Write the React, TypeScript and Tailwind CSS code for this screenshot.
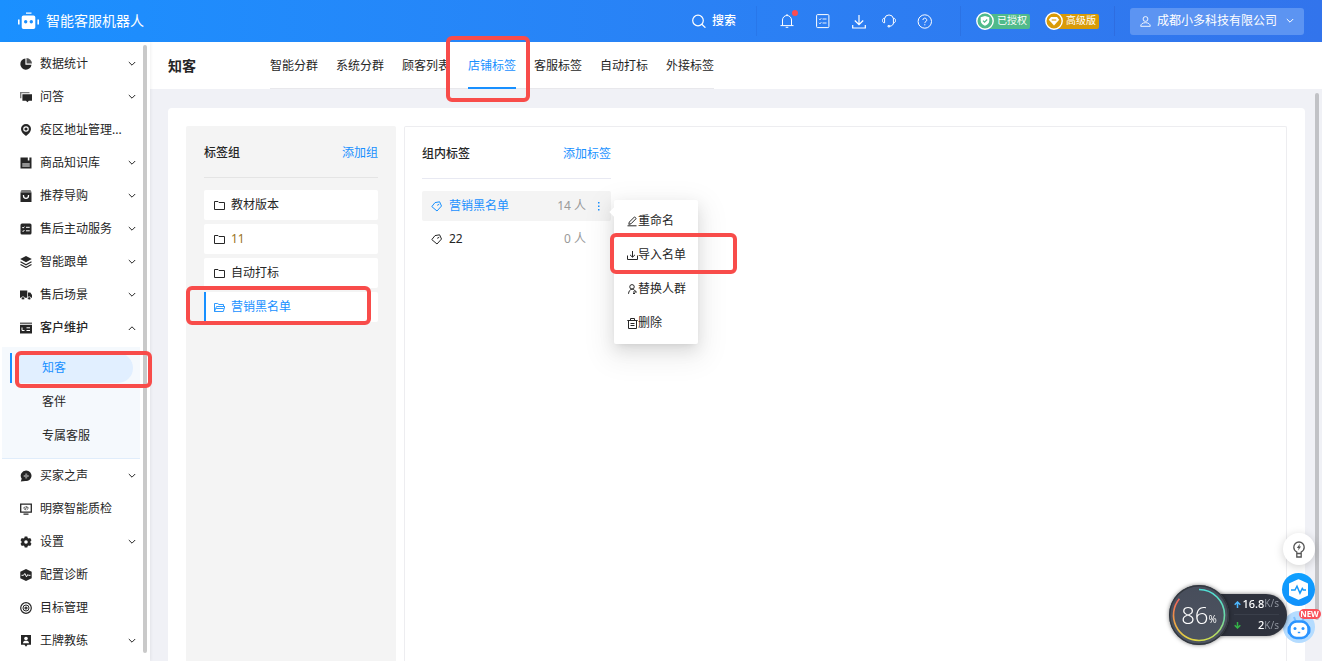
import type { ReactNode } from 'react';

const menuIcons: Record<string, ReactNode> = {
  stats: (
    <>
      <path d="M5.4.5A5.6 5.6 0 1 0 11.5 6.7H5.4z" />
      <path d="M6.5 0v5.5H12A5.6 5.6 0 0 0 6.5 0z" opacity=".8" />
    </>
  ),
  qa: (
    <>
      <path d="M0 1h9.5v1.3H1.4v5H0z" opacity=".6" />
      <path d="M2.4 3.2H12v6.6H8.8L7.4 11.2 6 9.8H2.4z" />
    </>
  ),
  pin: (
    <>
      <path fillRule="evenodd" d="M6 0a5 5 0 0 0-5 5c0 3 2.6 5.2 5 7 2.4-1.8 5-4 5-7a5 5 0 0 0-5-5zm0 2.2a2.8 2.8 0 1 1 0 5.6 2.8 2.8 0 0 1 0-5.6z" />
      <circle cx="6" cy="5" r="1.6" />
    </>
  ),
  book: (
    <>
      <path fillRule="evenodd" d="M.5.5h7.3v3h1.6v-3h2.1v11H.5zM2.500 6v4h7V6z" />
      <path d="M2.500 6h7v4h-7z" opacity=".5" />
    </>
  ),
  bag: (
    <>
      <path d="M1.500 0h9l1 2H.5z" opacity=".6" />
      <path d="M.5 2.300h11V12H.5z" />
      <path d="M3.500 5v.8a2.500 2.500 0 0 0 5 0V5" fill="none" stroke="#fff" strokeWidth="1.3" />
    </>
  ),
  list: (
    <>
      <rect x=".5" y=".5" width="11" height="11" rx="1.5" />
      <path d="M2.300 4.300l.8.8 1.300-1.500M6 4.300h3.700M2.300 7.800l.8.8L4.400 7M6 7.800h3.700" fill="none" stroke="#fff" />
    </>
  ),
  layers: (
    <>
      <path d="M6 0l5.800 3L6 6.200.2 3z" />
      <path d="M.5 5.800L6 8.800l5.500-3M.5 8.500l5.500 3 5.500-3" fill="none" stroke="currentColor" strokeWidth="1.2" />
    </>
  ),
  truck: (
    <>
      <path d="M0 1.500h7.300v7.300H0zM8 3.500h2.300L12 6v2.800H8z" />
      <circle cx="3" cy="9.3" r="1.6" stroke="#fff" strokeWidth=".7" />
      <circle cx="9.2" cy="9.3" r="1.6" stroke="#fff" strokeWidth=".7" />
    </>
  ),
  card: (
    <>
      <path d="M0 .5h12v1.800H0z" opacity=".7" />
      <path d="M0 3h12v8.500H0z" />
      <path d="M2 5.500v3h2.500M6.500 5.800H10M6.500 8.500H10" fill="none" stroke="#fff" />
    </>
  ),
  voice: (
    <>
      <path d="M6.200.5a5.300 5.300 0 1 1-1 10.500L.8 11.600 1.700 8.800A5.300 5.300 0 0 1 6.200.5z" />
      <path d="M3.700 5.900h5M6.200 3.400v5" stroke="#fff" strokeWidth="2" opacity=".45" />
    </>
  ),
  monitor: (
    <>
      <path d="M.7 1.200h10.600v8H.7zM3.500 11.200h5" fill="none" stroke="currentColor" strokeWidth="1.3" />
      <path d="M5.300 3.400L3.600 5.200l1.700 1.600M6.700 3.400l1.700 1.800-1.700 1.600M5.300 6.800l1.400-3.400" fill="none" stroke="currentColor" strokeWidth=".8" />
    </>
  ),
  gear: (
    <path
      fillRule="evenodd"
      d="M4.700.6h2.600l.4 1.400 1 .5 1.500-.5 1.300 2.300-1 1V6.700l1 1-1.300 2.300-1.500-.4-1 .5-.4 1.400H4.700L4.300 10.100l-1-.5-1.500.4L.5 7.700l1-1V5.300l-1-1L1.800 2l1.500.5 1-.5zM6 4.200a1.800 1.800 0 1 0 0 3.600 1.800 1.800 0 0 0 0-3.600z"
    />
  ),
  diagnose: (
    <>
      <path d="M6 0l5.700 2.800v6.400L6 12 .3 9.200V2.800z" />
      <path d="M1.500 6.300h2L4.800 4.500l1.700 3.300 1.300-2.200.7.700h2" fill="none" stroke="#fff" />
    </>
  ),
  target: (
    <g fill="none" stroke="currentColor">
      <circle cx="6" cy="6" r="5.3" strokeWidth="1.2" />
      <circle cx="6" cy="6" r="3" />
      <circle cx="6" cy="6" r="1" strokeWidth="1.2" />
    </g>
  ),
  coach: (
    <>
      <path d="M1 0h10v9.800H7.500L6 11.800 4.500 9.800H1z" />
      <circle cx="6" cy="3.5" r="1.8" fill="#fff" />
      <path d="M3 8.300c0-2 1.300-2.500 3-2.500s3 .5 3 2.500z" fill="#fff" />
    </>
  ),
};

const menu = [
  { icon: 'stats', label: '数据统计', arrow: true },
  { icon: 'qa', label: '问答', arrow: true },
  { icon: 'pin', label: '疫区地址管理...', arrow: false },
  { icon: 'book', label: '商品知识库', arrow: true },
  { icon: 'bag', label: '推荐导购', arrow: true },
  { icon: 'list', label: '售后主动服务', arrow: true },
  { icon: 'layers', label: '智能跟单', arrow: true },
  { icon: 'truck', label: '售后场景', arrow: true },
];

const menuAfter = [
  { icon: 'voice', label: '买家之声', arrow: true },
  { icon: 'monitor', label: '明察智能质检', arrow: false },
  { icon: 'gear', label: '设置', arrow: true },
  { icon: 'diagnose', label: '配置诊断', arrow: false },
  { icon: 'target', label: '目标管理', arrow: false },
  { icon: 'coach', label: '王牌教练', arrow: true },
];

const tabs = ['智能分群', '系统分群', '顾客列表', '店铺标签', '客服标签', '自动打标', '外接标签'];
const groups = ['教材版本', '11', '自动打标', '营销黑名单'];

function Chevron({ up }: { up?: boolean }) {
  return (
    <svg className={up ? 'size-2 rotate-180' : 'size-2'} viewBox="0 0 8 8" fill="none" stroke="currentColor">
      <path d="M.8 2L4 5.200l3.200-3.200" />
    </svg>
  );
}

function Highlight({ className }: { className: string }) {
  return <span className={`pointer-events-none absolute z-30 rounded-md border-4 border-[#f84c4a] ${className}`} />;
}

function MenuItem({ icon, label, arrow, open }: { icon: string; label: string; arrow: boolean; open?: boolean }) {
  return (
    <a href="#" className={`flex h-[33px] items-center pr-[7px] pl-5 ${open ? 'font-medium' : ''}`}>
      <svg className="mr-2 size-3 shrink-0" viewBox="0 0 12 12" fill="currentColor">
        {menuIcons[icon]}
      </svg>
      <span className="flex-1 whitespace-nowrap">{label}</span>
      {arrow && <Chevron up={open} />}
    </a>
  );
}

function Sidebar() {
  return (
    <aside className="relative z-10 flex w-[150px] shrink-0 bg-white shadow-[1px_0_3px_rgba(0,0,0,0.06)]">
      <nav className="min-w-0 flex-1 pt-[5px]">
        {menu.map((item) => (
          <MenuItem key={item.label} {...item} />
        ))}
        <MenuItem icon="card" label="客户维护" arrow open />
        <div className="mt-[3px] mr-[3px] ml-0.5 flex flex-col gap-1 border-b border-[#e0edfb] bg-[#f5f9fd] pt-1.5 pr-[7px] pb-[7px] pl-2">
          <a href="#" className="relative flex h-[30px] text-[#1890ff]">
            <span className="w-0.5 bg-[#1890ff]" />
            <span className="ml-1 flex flex-1 items-center rounded-r-full bg-[#e1efff] pl-[26px]">知客</span>
            <Highlight className="-top-0.5 -right-[19px] -bottom-[5px] left-[5px]" />
          </a>
          <a href="#" className="flex h-[30px] items-center pl-8">客伴</a>
          <a href="#" className="flex h-[30px] items-center pl-8">专属客服</a>
        </div>
        {menuAfter.map((item) => (
          <MenuItem key={item.label} {...item} />
        ))}
      </nav>
      <div className="mt-[3px] mr-[3px] mb-2 w-1 rounded-full bg-[#c9c9c9]" />
    </aside>
  );
}

function Badge({ label, gold }: { label: string; gold?: boolean }) {
  return (
    <div className="flex items-center">
      <svg className="z-10 size-[18px]" viewBox="0 0 18 18">
        <circle cx="9" cy="9" r="8.2" fill={gold ? '#d99b07' : '#50ba8b'} stroke="#fff" strokeWidth="1.4" />
        {gold ? (
          <>
            <path d="M6 5h6l2.200 2.800L9 13.500 3.800 7.800z" fill="#fff" />
            <path d="M6.700 8h4.600" stroke="#d99b07" strokeWidth="1.1" />
          </>
        ) : (
          <>
            <path d="M9 4l4.300 1.200v3.600c0 2.700-2.300 4.200-4.300 5-2-.8-4.300-2.300-4.300-5V5.200z" fill="#fff" />
            <path d="M7 8.700l1.500 1.500L11.200 7.500" fill="none" stroke="#50ba8b" strokeWidth="1.2" />
          </>
        )}
      </svg>
      <span
        className={`-ml-2 flex h-[15px] w-11 items-center rounded-xs pl-[11px] text-[10px] whitespace-nowrap ${
          gold ? 'bg-[#d99b07]' : 'bg-[#50ba8b]'
        }`}
      >
        {label}
      </span>
    </div>
  );
}

function HeaderIcon({ label, dot, children }: { label: string; dot?: boolean; children: ReactNode }) {
  return (
    <button type="button" aria-label={label} className="relative">
      <svg className="size-4" viewBox="0 0 16 16" fill="none" stroke="currentColor">
        {children}
      </svg>
      {dot && <span className="absolute -top-[3px] -right-[3px] size-1.5 rounded-full bg-[#fb4b50]" />}
    </button>
  );
}

function Header() {
  return (
    <header className="flex h-[42px] shrink-0 items-center bg-linear-to-r from-[#1a90ff] to-[#3274ec] pr-[18px] pl-[18px] text-white">
      <svg className="mr-[7px] h-[18px] w-[21px]" viewBox="0 0 21 18" fill="currentColor">
        <path d="M8 .5h5.500v1.300H8zM0 7.500h1.600v5H0zM19.400 7.500H21v5h-1.600z" />
        <path fillRule="evenodd" d="M5.500 3.500h10A1.800 1.800 0 0 1 17.300 5.300v9.900a1.800 1.800 0 0 1-1.800 1.800h-10a1.800 1.800 0 0 1-1.800-1.800V5.300a1.800 1.800 0 0 1 1.800-1.800zM7.700 8a1.700 1.700 0 1 0 0 3.400 1.700 1.700 0 0 0 0-3.400zm5.600 0a1.700 1.700 0 1 0 0 3.400 1.700 1.700 0 0 0 0-3.400z" />
      </svg>
      <h1 className="text-sm">智能客服机器人</h1>

      <button type="button" className="mr-5 ml-auto flex items-center gap-1.5 font-medium">
        <svg className="size-3.5" viewBox="0 0 14 14" fill="none" stroke="currentColor" strokeWidth="1.2">
          <circle cx="6" cy="6.5" r="5.3" />
          <path d="M9.800 10.300l3.600 3.400" />
        </svg>
        搜索
      </button>
      <span className="h-[30px] w-px bg-[#2877ea]" />

      <div className="mr-[27px] ml-[22px] flex items-center gap-5">
        <HeaderIcon label="通知" dot>
          <path d="M3.500 12.500V7a4.500 4.500 0 0 1 9 0v5.500M1.500 12.600h13M8 1v1.500M6.700 14.300h2.600" />
        </HeaderIcon>
        <HeaderIcon label="任务">
          <rect x="1.6" y="1.6" width="12.3" height="13" rx="1" />
          <path d="M4 5.800l1 1 1.300-1.600M7.500 6h4M4 9.800l1 1 1.300-1.600M7.500 10h4" strokeWidth=".9" />
        </HeaderIcon>
        <div className="flex gap-3.5">
          <HeaderIcon label="下载">
            <path d="M8 2v9.500M3.800 7.500L8 11.700l4.200-4.200M1.700 12v3h12.600v-3" strokeWidth="1.2" />
          </HeaderIcon>
          <HeaderIcon label="客服">
            <path d="M3.600 5.500a4.500 4.500 0 0 1 8.800 0M12.500 9.500c0 2.300-1.500 3.500-3.800 3.700" />
            <path d="M3.600 5.200v4.600C2 9.800 1.500 8.800 1.500 7.500S2 5.200 3.600 5.200zM12.400 5.200v4.600c1.600 0 2.100-1 2.100-2.300s-.5-2.300-2.100-2.300zM7 12.600h1.700v1.300H7z" />
          </HeaderIcon>
        </div>
        <HeaderIcon label="帮助">
          <circle cx="7.8" cy="8.5" r="6.7" />
          <path d="M5.900 7a1.900 1.900 0 1 1 2.800 1.700c-.6.300-.9.600-.9 1.400M7.800 11.200v1.100" />
        </HeaderIcon>
      </div>

      <div className="flex items-center gap-[15px]">
        <span className="h-[30px] w-px bg-[#2b72e4]" />
        <Badge label="已授权" />
        <Badge label="高级版" gold />
        <span className="h-[30px] w-px bg-[#2e6de0]" />
        <button type="button" className="flex h-[27px] w-[174px] items-center rounded-[3px] bg-[#5c94f2] px-2.5">
          <svg className="mr-1.5 size-[11px]" viewBox="0 0 11 11" fill="none" stroke="currentColor" strokeWidth=".9">
            <circle cx="5.5" cy="3" r="2.4" />
            <path d="M.7 10.300c0-2.300 2-3.600 4.800-3.600s4.800 1.300 4.800 3.600z" />
          </svg>
          <span className="flex-1 text-left whitespace-nowrap">成都小多科技有限公司</span>
          <Chevron />
        </button>
      </div>
    </header>
  );
}

function TagIcon() {
  return (
    <svg className="mr-[7px] size-[11px] shrink-0" viewBox="0 0 11 11" fill="none" stroke="currentColor">
      <path d="M4 1.600l4.600-.8 1.900 4.200L6 10 .8 5.600z" strokeLinejoin="round" />
      <path d="M6.200 4.300l2-1" />
    </svg>
  );
}

function GroupPanel() {
  return (
    <section className="w-[210px] shrink-0 rounded-t-xs bg-[#f4f4f4] px-[18px]">
      <div className="flex h-[52px] items-center justify-between border-b border-[#e4e4e4] pt-0.5">
        <h3 className="font-medium">标签组</h3>
        <button type="button" className="text-[#1890ff]">添加组</button>
      </div>
      <ul className="flex flex-col gap-1 pt-3">
        {groups.map((name) => {
          const active = name === '营销黑名单';
          return (
            <li key={name} className={`relative flex h-[30px] rounded-xs bg-white ${active ? 'text-[#1890ff]' : ''}`}>
              <span className={`w-0.5 ${active ? 'bg-[#1890ff]' : ''}`} />
              <button type="button" className="flex flex-1 items-center pl-2">
                <svg className="mr-1.5 size-[11px]" viewBox="0 0 11 11" fill="none" stroke="currentColor">
                  {active ? (
                    <path d="M.5 9.500v-8h3.200l1.200 1h4.600v2M.5 9.500l2-5h8.300l-1.500 5zM2.200 6.500h7.500" strokeWidth=".9" />
                  ) : (
                    <path d="M.5 1.500h3.500l1 1h5.500v7H.5z" />
                  )}
                </svg>
                <span className={name === '11' ? 'text-[#9a7424]' : ''}>{name}</span>
              </button>
              {active && <Highlight className="-top-1.5 right-[7px] -bottom-[3px] -left-[18px]" />}
            </li>
          );
        })}
      </ul>
    </section>
  );
}

function ActionMenu() {
  const items = [
    {
      label: '重命名',
      icon: <path d="M1.800 8.300l.5-2.200L7.500.9l1.700 1.600L4 7.800zM.5 9.800h9" />,
    },
    {
      label: '导入名单',
      icon: <path d="M5.500 1v6M3 4.800l2.500 2.400L8 4.800M.5 5.500v4h10v-4" />,
    },
    {
      label: '替换人群',
      icon: <path d="M5 .6a2.200 2.200 0 1 1 0 4.500A2.200 2.200 0 0 1 5 .6zM1.500 9.800c.2-2.500 1.500-4.400 3.500-4.700 1.300 0 2.300.7 2.900 1.700M6 8h3.500M7.800 6.500l1.700 1.500M6 9.500h2" />,
    },
    {
      label: '删除',
      icon: (
        <>
          <path d="M.3 2.500h10.400M3.500 2V.5h4V2M1.500 2.500v8h8v-8" />
          <path d="M3.500 5.500h4M3.500 7.500h4" />
        </>
      ),
    },
  ];
  return (
    <div className="absolute top-[9px] left-full z-20 ml-[3px] w-[84px] rounded-xs bg-white py-1 text-[#262626] shadow-[0_3px_6px_-4px_rgba(0,0,0,0.12),0_6px_16px_rgba(0,0,0,0.10),0_9px_28px_8px_rgba(0,0,0,0.06)]">
      <span className="absolute top-2 -left-[3px] size-2 rotate-45 bg-white" />
      {items.map((item) => (
        <button key={item.label} type="button" className="relative flex h-[34px] w-full items-center pl-[13px] whitespace-nowrap">
          <svg className="size-[11px] shrink-0" viewBox="0 0 11 11" fill="none" stroke="currentColor">
            {item.icon}
          </svg>
          {item.label}
          {item.label === '导入名单' && <Highlight className="-top-[5px] -right-[39px] -bottom-0.5 -left-1" />}
        </button>
      ))}
    </div>
  );
}

function TagPanel() {
  return (
    <section className="min-w-0 flex-1 rounded-t-xs border border-b-0 border-[#ededf0] px-[17px]">
      <div className="w-[189px]">
        <div className="flex h-[52px] items-center justify-between border-b border-[#e8e9f2] pt-0.5">
          <h3 className="font-medium">组内标签</h3>
          <button type="button" className="text-[#1890ff]">添加标签</button>
        </div>
        <ul className="flex flex-col gap-[3px] pt-3">
          <li className="relative flex h-[30px] items-center rounded-xs bg-[#f4f4f4] pr-2.5 pl-[9px] text-[#1890ff]">
            <TagIcon />
            <span className="flex-1">营销黑名单</span>
            <span className="text-[#999]">14 人</span>
            <button type="button" aria-label="更多" className="ml-2.5">
              <svg className="h-3 w-[5px]" viewBox="0 0 5 12" fill="currentColor">
                <path d="M2 2h1.500v1.500H2zM2 5.500h1.500V7H2zM2 9h1.500v1.500H2z" />
              </svg>
            </button>
            <ActionMenu />
          </li>
          <li className="flex h-[30px] items-center pr-[25px] pl-[9px]">
            <TagIcon />
            <span className="flex-1">22</span>
            <span className="text-[#999]">0 人</span>
          </li>
        </ul>
      </div>
    </section>
  );
}

function SpeedWidget() {
  return (
    <div className="fixed right-[35px] bottom-4 z-40 flex items-center text-white">
      <div className="relative z-10 flex size-[60px] items-center justify-center rounded-full bg-linear-to-b from-[#474d5b] to-[#4d5460] shadow-[0_0_4px_rgba(0,0,0,0.5)]">
        <svg className="absolute inset-0 size-full" viewBox="0 0 60 60" fill="none" strokeWidth="1.6">
          <defs>
            <linearGradient id="ringRight" x1="0" y1="0" x2="0" y2="1">
              <stop offset="0" stopColor="#4fe0d8" />
              <stop offset=".6" stopColor="#6fd9a0" />
              <stop offset="1" stopColor="#d6e04a" />
            </linearGradient>
            <linearGradient id="ringLeft" x1="0" y1="0" x2="0" y2="1">
              <stop offset="0" stopColor="#f0605a" />
              <stop offset=".5" stopColor="#ef9a45" />
              <stop offset="1" stopColor="#e0d845" />
            </linearGradient>
          </defs>
          <circle cx="30" cy="30" r="29.3" stroke="#33383f" strokeWidth="1.4" />
          <path d="M30 4.500a25.500 25.500 0 0 1 0 51" stroke="url(#ringRight)" />
          <path d="M30 55.500A25.500 25.500 0 0 1 10.400 13.700" stroke="url(#ringLeft)" />
        </svg>
        <span className="font-['Open_Sans'] text-2xl font-light">86</span>
        <span className="mt-2.5 font-['Open_Sans'] text-[10px]">%</span>
      </div>
      <div className="-ml-[30px] flex h-[42px] w-[88px] flex-col rounded-r-full bg-[#2e323d] pr-2 pl-[35px] shadow-[0_0_4px_rgba(0,0,0,0.5)]">
        <div className="flex h-[21px] items-center border-b border-[#3a3f4a]">
          <svg className="size-[7px]" viewBox="0 0 7 7" fill="none" stroke="#4db8ff" strokeWidth="1.5">
            <path d="M3.500 7V1M.7 3.800L3.500 1l2.800 2.800" />
          </svg>
          <span className="ml-auto text-[11px] font-medium">16.8</span>
          <span className="text-[10px] text-[#8d929c]">K/s</span>
        </div>
        <div className="flex h-[21px] items-center">
          <svg className="size-[7px]" viewBox="0 0 7 7" fill="none" stroke="#35b548" strokeWidth="1.5">
            <path d="M3.500 0v6M.7 3.200L3.500 6l2.800-2.800" />
          </svg>
          <span className="ml-auto text-[11px] font-medium">2</span>
          <span className="text-[10px] text-[#8d929c]">K/s</span>
        </div>
      </div>
    </div>
  );
}

function FloatingTools() {
  return (
    <div className="fixed right-[7px] bottom-[18px] z-30 flex flex-col items-center">
      <button type="button" aria-label="提示" className="flex size-8 items-center justify-center rounded-full bg-white text-[#555] shadow-[0_2px_10px_rgba(0,0,0,0.18)]">
        <svg className="h-[17px] w-3" viewBox="0 0 12 17" fill="none" stroke="currentColor" strokeWidth="1.3">
          <path d="M3.800 12.500V11C2 10 .8 8.300.8 6.200a5.200 5.200 0 0 1 10.400 0c0 2.100-1.200 3.800-3 4.800v1.500zM3.800 12.500V16h4.400v-3.500" />
          <path d="M6.900 2.800L3.800 7h1.800L5.100 9.600l3-4H6.400z" fill="currentColor" stroke="none" />
        </svg>
      </button>
      <button type="button" aria-label="诊断" className="mt-2 flex size-[33px] items-center justify-center rounded-full bg-linear-to-b from-[#0fa0ff] to-[#1191fb]">
        <svg className="size-[21px]" viewBox="0 0 21 21">
          <path d="M10.500 1l8.800 4v11l-8.800 4-8.800-4V5z" fill="#fff" stroke="#fff" strokeWidth="1.4" strokeLinejoin="round" />
          <path d="M3 11h4l2-3.800 3 7 2.300-4.700 1 1.500H18" fill="none" stroke="#1599fb" strokeWidth="1.5" />
        </svg>
      </button>
      <button type="button" aria-label="机器人" className="relative mt-[5px] flex size-8 items-center justify-center rounded-full bg-[#b5dcff]">
        <svg className="size-7" viewBox="0 0 28 28">
          <path d="M9 4l2 5M19 4l-2 5" stroke="#7cc0ff" strokeWidth="2" />
          <rect x="2.5" y="12" width="23" height="10" rx="4" fill="#2b94ff" />
          <rect x="4.5" y="8.5" width="19" height="16.5" rx="7" fill="#fff" stroke="#2b94ff" strokeWidth="2.4" />
          <circle cx="10" cy="15.5" r="1.5" fill="#2b94ff" />
          <circle cx="18" cy="15.5" r="1.500" fill="#2b94ff" />
          <path d="M12.800 19.500h2.400" stroke="#2b94ff" strokeWidth="1.4" />
        </svg>
        <span className="absolute -top-0.5 left-4 flex h-2.5 w-[22px] items-center justify-center rounded-full bg-[#f9515a] text-[8px] font-bold text-white">
          NEW
        </span>
      </button>
    </div>
  );
}

export default function App() {
  return (
    <div lang="zh-CN" className="flex h-screen flex-col overflow-hidden bg-[#f0f1f6] font-['Noto_Sans','Noto_Sans_CJK_SC',sans-serif] text-xs text-[#262626]">
      <Header />
      <div className="flex min-h-0 flex-1">
        <Sidebar />
        <main className="flex min-w-0 flex-1 flex-col">
          <div className="flex h-[47px] shrink-0 bg-white pl-[18px]">
            <h2 className="flex w-[102px] items-center text-sm font-bold">知客</h2>
            <nav className="flex gap-[18px] border-b border-[#e8e8ec]">
              {tabs.map((tab) => {
                const active = tab === '店铺标签';
                return (
                  <a
                    key={tab}
                    href="#"
                    className={`relative -mb-px flex items-center border-b-2 pt-0.5 whitespace-nowrap ${
                      active ? 'border-[#1890ff] text-[#1890ff]' : 'border-transparent'
                    }`}
                  >
                    {tab}
                    {active && <Highlight className="-top-1.5 -right-3.5 -bottom-[15px] -left-[22px]" />}
                  </a>
                );
              })}
            </nav>
          </div>
          <div className="flex min-h-0 flex-1 pr-[3px] pl-[18px]">
            <div className="mt-[19px] mr-2.5 flex min-w-0 flex-1 gap-2 rounded-t-sm bg-white px-[18px] pt-[18px]">
              <GroupPanel />
              <TagPanel />
            </div>
            <div className="mt-1 mb-[41px] w-1 rounded-full bg-[#c1c2c6]" />
          </div>
        </main>
      </div>
      <SpeedWidget />
      <FloatingTools />
    </div>
  );
}
